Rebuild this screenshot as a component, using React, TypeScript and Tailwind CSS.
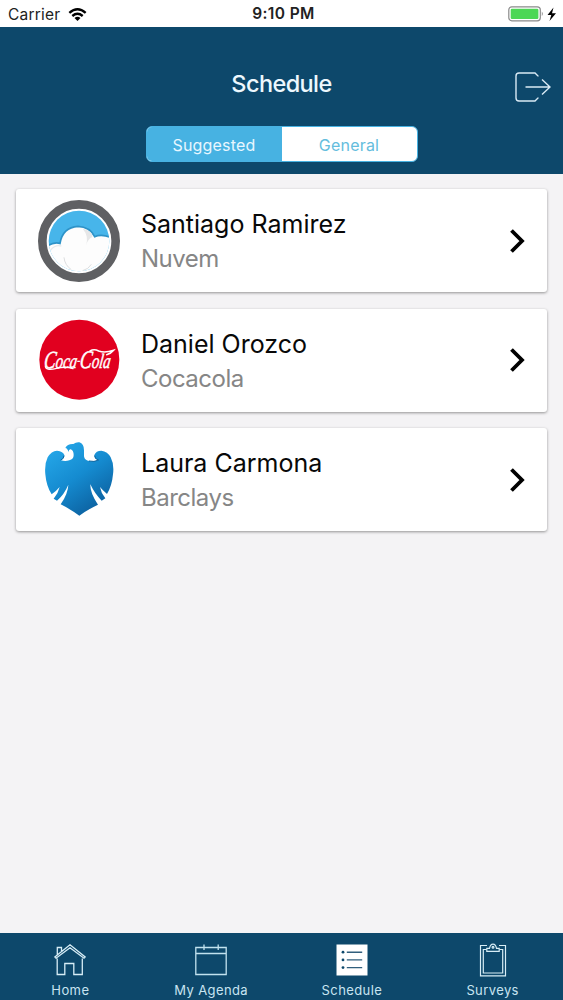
import type { ReactNode } from "react";

function NuvemLogo() {
  return (
    <svg viewBox="84 57 246 246" className="size-[82px] shrink-0">
      <defs>
        <clipPath id="sky">
          <circle cx="207" cy="180" r="91" />
        </clipPath>
      </defs>
      <circle cx="207" cy="180" r="110" fill="#fff" stroke="#5f6063" strokeWidth="26" />
      <g clipPath="url(#sky)">
        <rect x="110" y="85" width="195" height="195" fill="#47b5ea" />
        <path
          d="M100 204Q128 180 150 187Q158 139 204 136Q240 138 254 167Q276 157 310 172V300H100Z"
          fill="#fdfdfd"
          stroke="#2e93c8"
          strokeWidth="5"
        />
        <path d="M218 143Q248 148 247 168Q233 174 228 194Q237 165 218 143Z" fill="#e6e7e8" />
        <path d="M162 229Q164 252 184 266M244 250Q236 264 218 269" fill="none" stroke="#dcdedf" strokeWidth="3" />
        <path d="M122 207Q136 190 154 195" fill="none" stroke="#e8eaec" strokeWidth="4" />
      </g>
    </svg>
  );
}

function ColaLogo() {
  return (
    <svg viewBox="84 57 246 246" className="size-[82px] shrink-0">
      <circle cx="208" cy="179" r="120" fill="#e1001f" />
      <text
        transform="translate(100 203) skewX(-8)"
        fill="#fff"
        fontFamily="'Liberation Serif', serif"
        fontStyle="italic"
        fontSize="62"
        stroke="#fff"
        strokeWidth="1.5"
        textLength="200"
        lengthAdjust="spacingAndGlyphs"
      >
        <tspan fontSize="74">C</tspan>oca<tspan fontSize="34" dy="-12">-</tspan>
        <tspan fontSize="76" dy="12">C</tspan>ola
      </text>
      <g fill="none" stroke="#fff" strokeLinecap="round">
        <path d="M106 198Q106 213 140 205Q168 198 189 206" strokeWidth="4" />
        <path d="M240 153Q252 146 266 153Q284 160 311 151Q302 162 290 164" strokeWidth="4.5" />
      </g>
    </svg>
  );
}

function EagleLogo() {
  return (
    <svg viewBox="84 60 246 246" className="size-[82px] shrink-0">
      <defs>
        <linearGradient id="eagle" x1="0.1" y1="0" x2="0.75" y2="1">
          <stop offset="0" stopColor="#27aaeb" />
          <stop offset="0.5" stopColor="#158bd0" />
          <stop offset="1" stopColor="#0b5c9a" />
        </linearGradient>
      </defs>
      <path
        d="M166 87Q172 74 190 75Q198 69 208 70Q222 74 222 94V112Q224 125 238 126Q252 129 266 123Q252 118 253 108Q258 95 274 95Q293 97 302 115Q313 136 309 166Q306 200 291 225Q278 214 270 204Q273 222 286 238L275 245Q254 224 241 196Q240 222 264 257Q236 270 208 290Q180 270 152 256Q174 224 175 197Q163 226 141 245L131 239Q145 222 149 204Q139 216 125 226Q109 202 106 166Q103 135 113 115Q124 96 141 95Q160 97 163 108Q164 118 152 123Q164 129 178 124Q191 121 191 108Q191 95 182 91Q177 90 175 99Q173 88 166 87Z"
        fill="url(#eagle)"
      />
      <path d="M254 110Q254 121 266 123Q252 130 237 126M162 110Q162 120 152 123" fill="none" stroke="#0c649f" strokeWidth="3" />
    </svg>
  );
}

function HomeIcon() {
  return (
    <svg viewBox="0 0 32 32" className="size-8" fill="none" stroke="#d7edf6" strokeWidth="1.3">
      <path d="M.8 13 16 .8 31.200 13 30 14.200 16 3.800 2 14.200ZM3.200 14.500V30.500h7.600V19.500h9V30.500h8.500V14.500M3.300 10.500V3.500h4.200v3.600" />
    </svg>
  );
}

function AgendaIcon() {
  return (
    <svg viewBox="0 0 32 32" className="size-8" fill="none" stroke="#c2e2ef" strokeWidth="1.3">
      <path d="M.8 3.500h30.400V30.500H.8ZM.8 9.500h30.400M9 .5v5.500M23.200.5v5.500" />
    </svg>
  );
}

function ScheduleIcon() {
  return (
    <svg viewBox="0 0 32 32" className="size-8">
      <path d="M.5.5h31v31H.5z" fill="#fff" />
      <g fill="#0d486b">
        <circle cx="7" cy="8.2" r="1.4" />
        <circle cx="7" cy="15.9" r="1.4" />
        <circle cx="7" cy="23.6" r="1.4" />
      </g>
      <path d="M10.8 8.2h15.400M10.8 15.9h15.400M10.8 23.6h15.400" stroke="#315f7d" strokeWidth="1.4" />
    </svg>
  );
}

function SurveysIcon() {
  return (
    <svg viewBox="0 0 32 34" className="h-[34px] w-8" fill="none" stroke="#d7edf6" strokeWidth="1.2">
      <path d="M10 2.500H3.500V32.800H28.500V2.500H22" />
      <path d="M9.500 6.500H6.300v23.500h19.400V6.500h-3.200" />
      <path d="M9.800 8.300V5.400h2.700C13 2.700 14 1.200 16 1.200s3 1.500 3.500 4.200h2.700v2.900Z" />
      <circle cx="16" cy="4.300" r="0.9" />
    </svg>
  );
}

const contacts = [
  { name: "Santiago Ramirez", company: "Nuvem", logo: <NuvemLogo /> },
  { name: "Daniel Orozco", company: "Cocacola", logo: <ColaLogo /> },
  { name: "Laura Carmona", company: "Barclays", logo: <EagleLogo /> },
];

function Tab({ label, children }: { label: string; children: ReactNode }) {
  return (
    <button className="flex flex-1 flex-col items-center pt-[10px]">
      <span className="flex h-[34px] items-center">{children}</span>
      <span className="mt-[5px] text-[13px] leading-4 tracking-[0.4px] text-[#c8e4f1]">{label}</span>
    </button>
  );
}

export default function App() {
  return (
    <div className="flex h-[1000px] w-[563px] flex-col overflow-hidden bg-[#f4f3f5] font-['Inter',sans-serif]">
      <div className="grid h-[27px] grid-cols-3 items-center bg-white pr-[6px] pl-2 text-[#222]">
        <div className="flex items-center gap-2 pt-[2px]">
          <span className="text-[15.5px] leading-5 tracking-[0.2px]">Carrier</span>
          <svg viewBox="0 0 20 14" className="h-[13px] w-[19px]" fill="none" stroke="#000" strokeWidth="2.6">
            <path d="M1.2 5.2Q10-2.4 18.8 5.2M4.4 8.6Q10 4 15.6 8.6" />
            <path d="M6.8 10.7Q10 8 13.2 10.7L10 14Z" fill="#000" stroke="none" />
          </svg>
        </div>
        <span className="pt-px pl-[2px] text-center text-[15.5px] font-semibold tracking-[0.4px]">9:10 PM</span>
        <svg viewBox="0 0 49 16" className="h-4 w-[49px] justify-self-end">
          <rect x="0.8" y="0.8" width="31.5" height="14" rx="3" fill="#fff" stroke="#8b8b8b" strokeWidth="1.2" />
          <rect x="2.7" y="2.7" width="27.7" height="10.2" rx="1.2" fill="#4cd755" />
          <path d="M33.8 5.5q2 2.3 0 4.6z" fill="#8b8b8b" />
          <path d="M45.5 1.5 39.5 9h3.8L41.5 15 48 7.2h-4z" fill="#000" />
        </svg>
      </div>

      <header className="flex h-[147px] flex-col items-center bg-[#0d486b]">
        <div className="grid w-full grid-cols-[1fr_auto_1fr] items-center pt-[38px] pr-3 pl-3">
          <span />
          <h1 className="text-[23.5px] leading-[30px] font-medium tracking-[-0.6px] text-[#edf8fe]">Schedule</h1>
          <svg viewBox="0 0 36 30" className="mt-[7px] h-[30px] w-9 justify-self-end" fill="none" stroke="#d9eaf5" strokeWidth="1.4">
            <path d="M23 4.500V4L20 1H4Q1 1 1 4V26Q1 29 4 29H20L23 26V25.500M10.500 15H35M27 7.500 35 15l-8 7.500" />
          </svg>
        </div>
        <div className="mt-6 flex h-9 w-[272px] overflow-hidden rounded-md border border-[#47b2e2] bg-white text-[16px] tracking-[0.2px]">
          <button className="w-[135px] bg-[#47b2e2] pt-[2px] text-[#e8f7ff]">Suggested</button>
          <button className="flex-1 pt-[2px] text-[#64bddd]">General</button>
        </div>
      </header>

      <main className="flex flex-1 flex-col gap-[16.6px] px-4 pt-[15px]">
        {contacts.map((c) => (
          <div
            key={c.name}
            className="flex h-[103px] items-center rounded-[3px] bg-white px-[22px] shadow-[0_1px_3px_rgba(0,0,0,0.4)]"
          >
            {c.logo}
            <div className="ml-[21px] flex-1 pt-[2px]">
              <div className="text-[25px] leading-[35px] text-[#080808]">{c.name}</div>
              <div className="text-[24px] leading-[34px] tracking-[-0.5px] text-[#868686]">{c.company}</div>
            </div>
            <svg viewBox="0 0 16 24" className="h-6 w-4" fill="none" stroke="#000" strokeWidth="3.8">
              <path d="M2.500 1.500 13 12 2.500 22.500" />
            </svg>
          </div>
        ))}
      </main>

      <nav className="flex h-[67px] bg-[#0d486b]">
        <Tab label="Home">
          <HomeIcon />
        </Tab>
        <Tab label="My Agenda">
          <AgendaIcon />
        </Tab>
        <Tab label="Schedule">
          <ScheduleIcon />
        </Tab>
        <Tab label="Surveys">
          <SurveysIcon />
        </Tab>
      </nav>
    </div>
  );
}
